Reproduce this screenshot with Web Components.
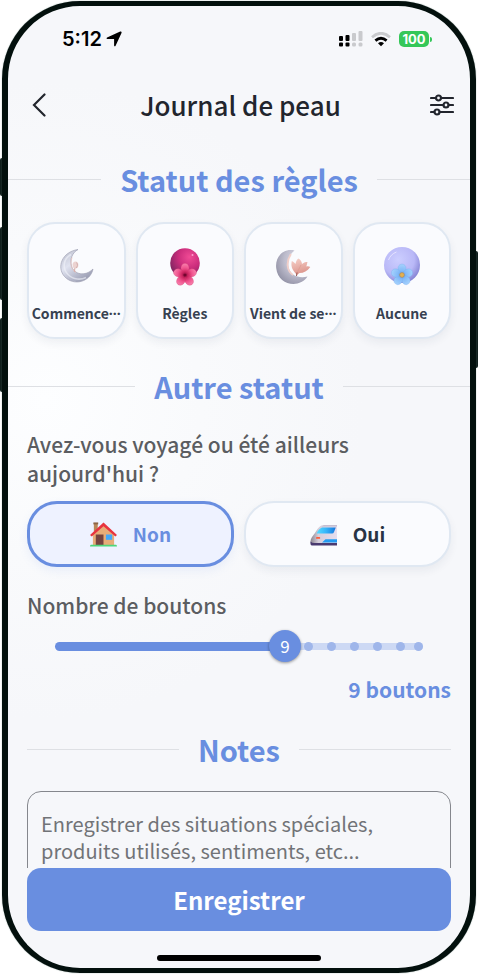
<!DOCTYPE html>
<html lang="fr">
<head>
<meta charset="utf-8">
<meta name="viewport" content="width=device-width, initial-scale=1">
<title>Journal de peau</title>
<style>
html{--blue:#698ee0;--ink:#22252d;--text:#5b5d61;--line:#dee0e4;--edge:#e0e8f2;--card:#fafbfe}
body{margin:0;background:#fff;color:var(--ink);font-family:"Noto Sans CJK SC","Noto Sans",sans-serif}
</style>
</head>
<body>
<phone-frame>
  <status-bar slot="status"></status-bar>
  <page-header slot="header">Journal de peau</page-header>
  <section-title wide>Statut des règles</section-title>
  <period-choices></period-choices>
  <section-title wide class="second">Autre statut</section-title>
  <travel-question></travel-question>
  <count-slider></count-slider>
  <section-title>Notes</section-title>
  <notes-field></notes-field>
  <save-bar slot="footer">Enregistrer</save-bar>
</phone-frame>

<script>
const define = (name, html, setup) => {
  const t = document.createElement('template');
  t.innerHTML = '<style>*{box-sizing:border-box}</style>' + html;
  customElements.define(name, class extends HTMLElement {
    constructor() {
      super();
      this.attachShadow({ mode: 'open' }).append(t.content.cloneNode(true));
    }
    connectedCallback() { if (setup) setup(this, this.shadowRoot); }
  });
};

define('phone-frame', `
<style>
:host{display:block;height:100vh;padding:1px 2px;box-sizing:border-box;position:relative}
.key{position:absolute;width:4px;background:#101f1c;border-radius:2px}
.k1{left:0;top:158px;height:38px}.k2{left:0;top:227px;height:73px}.k3{left:0;top:318px;height:74px}
.k4{right:0;top:251px;height:117px}
.case{position:relative;height:100%;border:solid #03100d;border-width:5px 6px;border-radius:78px;overflow:hidden;
 display:flex;flex-direction:column;box-shadow:0 0 1px #5b7a72;
 background:radial-gradient(circle at 8% 41%,#fdfeff 0,#f9fafc 22%,#f6f7fa 45%)}
.scroll{flex:1;min-height:0;overflow:hidden auto;scrollbar-width:none;padding:21px 19px 0}
</style>
<i class="key k1"></i><i class="key k2"></i><i class="key k3"></i><i class="key k4"></i>
<div class="case"><slot name="status"></slot><slot name="header"></slot>
<main class="scroll"><slot></slot></main><slot name="footer"></slot></div>`);

define('status-bar', `
<style>
:host{display:flex;align-items:center;justify-content:space-between;height:66px;padding:0 38px 0 54px;flex:none;color:#000}
div{display:flex;align-items:center}
.time{font:600 20px/24px Inter,sans-serif;gap:4px}
.icons{gap:8px}
.bat{display:flex;align-items:center;gap:1px}
.bat b{font:700 13px/16px Inter,sans-serif;color:#fff;background:#35c759;border-radius:5px;width:30px;text-align:center}
.bat i{width:2px;height:5px;background:#35c759;border-radius:0 2px 2px 0}
</style>
<div class="time"><span>5:12</span>
<svg width="16" height="16" viewBox="0 0 16 16"><path d="M15.300.700c.400.300.400.700.200 1.200L9.600 14.800c-.400.900-1.500.700-1.500-.300V8.400c0-.300-.100-.400-.400-.400H1.400C.400 8 .200 6.900 1.100 6.500L14.200.600c.400-.200.800-.200 1.100.100z"/></svg></div>
<div class="icons">
<svg width="24" height="16" viewBox="0 0 24 16"><g fill="#c9cacd"><rect x="13" y="2" width="4" height="8" rx="1"/><rect x="19.500" y="0" width="4" height="10" rx="1"/><rect x="13" y="11.500" width="4" height="4" rx="1.500"/><rect x="19.500" y="11.500" width="4" height="4" rx="1.500"/></g><rect x="0" y="5" width="4" height="5" rx="1"/><rect x="6.500" y="4" width="4" height="6" rx="1"/><rect x="0" y="11.500" width="4" height="4" rx="1"/><rect x="6.500" y="11.500" width="4" height="4" rx="1"/></svg>
<svg width="20" height="15" viewBox="0 0 20 15"><path d="M1 5.200q9-7.800 18 0" fill="none" stroke="#c9cacd" stroke-width="2.800"/><path d="M4.400 8.600q5.600-4.700 11.200 0" fill="none" stroke="#000" stroke-width="2.800"/><path d="M7 11.200q3-2.500 6 0L10 14.300z"/></svg>
<span class="bat"><b>100</b><i></i></span></div>`);

define('page-header', `
<style>
:host{display:grid;grid-template-columns:32px 1fr 32px;align-items:center;height:66px;padding:0 12px 0 15px;flex:none}
button{border:0;background:none;padding:0;height:32px;display:grid;place-items:center;color:inherit}
h1{margin:0;font-size:26px;line-height:36px;font-weight:500;text-align:center;white-space:nowrap}
svg{fill:none;stroke:currentColor;stroke-width:2.200;stroke-linecap:round}
</style>
<button aria-label="Retour"><svg width="14" height="24" viewBox="0 0 14 24"><path d="M12.500 1.500 2 12l10.500 10.500"/></svg></button>
<h1><slot></slot></h1>
<button aria-label="Réglages"><svg width="24" height="22" viewBox="0 0 24 22"><path d="M1 4h4.800M11.200 4H23M1 11h12.300M18.700 11H23M1 18h3.300M9.700 18H23"/><circle cx="8.500" cy="4" r="2.500"/><circle cx="16" cy="11" r="2.500"/><circle cx="7" cy="18" r="2.500"/></svg></button>`);

define('section-title', `
<style>
:host{display:flex;align-items:center;gap:19px;height:40px}
:host([wide]){margin:0 -19px}
:host(.second){margin-top:27px}
:host::before,:host::after{content:"";flex:1;height:1px;background:var(--line)}
h2{margin:0;font-size:29px;line-height:42px;font-weight:700;color:var(--blue)}
</style><h2><slot></slot></h2>`);

define('period-choices', `
<style>
:host{display:grid;grid-template-columns:repeat(4,minmax(0,1fr));gap:10px;margin-top:23px}
button{height:117px;padding:20px 0 0;border:2px solid var(--edge);border-radius:28px;background:var(--card);
 box-shadow:0 4px 8px #20305010;display:flex;flex-direction:column;align-items:center;gap:14px;font:inherit;color:#374151;min-width:0}
span{font-size:14px;line-height:22px;font-weight:700;white-space:nowrap}
.dots{font-family:"Open Sans","Noto Sans",sans-serif;font-style:normal}
</style>
<button><svg width="44" height="44" viewBox="0 0 44 44"><defs>
<linearGradient id="m1" x1="0" y1="0" x2=".7" y2="1"><stop stop-color="#b7bac9"/><stop offset=".45" stop-color="#e0e3f0"/><stop offset="1" stop-color="#999cb2"/></linearGradient></defs>
<path d="M22.500 5.500C6 8 1 23.500 9 32.500c9 10 26 5.500 28.500-7.500-8 8-19 5.500-21.500-3C14 15 17 8.500 22.500 5.500z" transform="translate(1.500 0)" fill="url(#m1)" stroke="#a0a2b4" stroke-width=".7"/>
<path d="M17 10.500C8.500 15 8.500 25 14 30.500s13 5.500 18 3" fill="none" stroke="#f2f3fa" stroke-width="1.600" opacity=".6"/>
<path d="M18 13.500c-2.500 7-.5 12 4 15" fill="none" stroke="#e7c5c2" stroke-width=".9"/>
<path d="M20.500 28c-.2-3 .5-5 1.500-7" fill="none" stroke="#d8b1ad" stroke-width="1.300"/><ellipse cx="21.500" cy="21" rx="2.900" ry="3.600" fill="#ecd3d1"/><path d="M22.500 18.500c1.600 2 1 4-.5 5.500" fill="none" stroke="#c9a19f" stroke-width=".7"/></svg><span>Commence<i class="dots">···</i></span></button>
<button><svg width="44" height="44" viewBox="0 0 44 44"><defs>
<radialGradient id="r1" cx=".65" cy=".3" r=".75"><stop stop-color="#f04b95"/><stop offset=".5" stop-color="#cb2d7c"/><stop offset="1" stop-color="#7c2560"/></radialGradient>
<radialGradient id="r2" gradientUnits="userSpaceOnUse" cx="22" cy="31" r="12"><stop stop-color="#8a0a3c"/><stop offset=".3" stop-color="#d32a66"/><stop offset=".6" stop-color="#f05590"/><stop offset="1" stop-color="#f885b0"/></radialGradient></defs>
<circle cx="22" cy="19" r="14.800" fill="url(#r1)"/><circle cx="29.500" cy="11" r="1" fill="#ff9dcc"/>
<g fill="url(#r2)" stroke="#cf3068" stroke-width=".3"><path id="p" d="M22 31c-5-3.500-5-9-2-11.200q2-1.300 4 0c3 2.200 3 7.700-2 11.200z"/><use href="#p" transform="rotate(72 22 31)"/><use href="#p" transform="rotate(144 22 31)"/><use href="#p" transform="rotate(216 22 31)"/><use href="#p" transform="rotate(288 22 31)"/></g><circle cx="22" cy="31" r="1.600" fill="#74052f"/></svg><span>Règles</span></button>
<button><svg width="44" height="44" viewBox="0 0 44 44"><defs>
<radialGradient id="v1" cx=".7" cy=".3" r=".8"><stop stop-color="#deddeb"/><stop offset=".55" stop-color="#bdbccc"/><stop offset="1" stop-color="#9191a5"/></radialGradient>
<linearGradient id="v2" x1="0" y1="0" x2=".3" y2="1"><stop stop-color="#f7d2cb"/><stop offset="1" stop-color="#dc958c"/></linearGradient></defs>
<path d="M23.500 6.500C11 4 4 14 5.200 24 7 42 29 44.500 36.500 32.500c-8 2-16.500-.5-18.700-8.500-1.800-7.500 1-14 5.700-17.500z" fill="url(#v1)"/>
<path d="M20 10c-5.500 8-4 17 2 21" fill="none" stroke="#f1cfc9" stroke-width="1.800"/>
<path d="M26 31c-6-6-6-10-5.200-14 2 1 3 2 3.700 3 .5-3 1.500-4.500 3-5.500 2 1 3.300 3 3.500 5.500 2-1.700 4-2 5.500-2-.5 2-.7 3.200-1.200 4.500 1.600-.5 2.700-.3 4 .5-3 4-6.500 6-10.800 6L26 31z" fill="url(#v2)"/><path d="M26 29c2-4 3-6 4-8" fill="none" stroke="#d8958c" stroke-width=".6"/><path d="M26 28.500 25.500 32" stroke="#98544e" stroke-width="1"/></svg><span>Vient de se<i class="dots">···</i></span></button>
<button><svg width="44" height="44" viewBox="0 0 44 44"><defs>
<radialGradient id="a1" cx=".4" cy=".35" r=".68"><stop stop-color="#ccceff"/><stop offset=".65" stop-color="#b9b8f7"/><stop offset="1" stop-color="#8483d3"/></radialGradient>
<radialGradient id="a2" gradientUnits="userSpaceOnUse" cx="22" cy="31" r="11"><stop stop-color="#5f99ea"/><stop offset=".4" stop-color="#83baf8"/><stop offset="1" stop-color="#a5d2fd"/></radialGradient></defs>
<circle cx="22" cy="21" r="18" fill="url(#a1)"/><path d="M8.500 16c1.500-4 4-6.500 8-8" fill="none" stroke="#eceaff" stroke-width="1" opacity=".8"/>
<g fill="url(#a2)" stroke="#73a8ec" stroke-width=".3"><path id="q" d="M22 31c-5-3.500-5-8.500-2-10.500q2-1 4 0c3 2 3 7-2 10.500z"/><use href="#q" transform="rotate(72 22 31)"/><use href="#q" transform="rotate(144 22 31)"/><use href="#q" transform="rotate(216 22 31)"/><use href="#q" transform="rotate(288 22 31)"/></g><circle cx="22" cy="31" r="2.400" fill="#e3b04f" stroke="#9f7f55" stroke-width=".5"/></svg><span>Aucune</span></button>`);

define('travel-question', `
<style>
:host{display:block;margin-top:24px}
p{margin:0 0 13px;font-size:21px;line-height:29px;font-weight:500;color:var(--text)}
div{display:grid;grid-template-columns:1fr 1fr;gap:10px}
button{height:66px;border:2px solid var(--edge);border-radius:30px;background:var(--card);box-shadow:0 4px 8px #20305010;
 display:flex;align-items:center;justify-content:center;gap:16px;font:inherit;font-size:19px;line-height:28px;font-weight:700;color:#283344;padding:0}
button[aria-pressed=true]{border:3px solid var(--blue);background:#eef2ff;color:var(--blue);box-shadow:0 4px 10px #698ee01c}
</style>
<p>Avez-vous voyagé ou été ailleurs aujourd'hui&nbsp;?</p>
<div>
<button aria-pressed="true"><svg width="27" height="27" viewBox="0 0 28 28"><path d="M4 2h4v9H4z" fill="#b78859"/><path d="M3.500 1.500h5v2h-5z" fill="#8d6546"/><path d="M3 14 14 3l11 11v12H3z" fill="#e7ad78"/><path d="m0 14.500 14-13 14 13-1.700 1.700L14 5.500 1.800 16.200z" fill="#e8343f"/><path d="M6 14h8v11H6z" fill="#764440"/><path d="M16.500 14H23v5.500h-6.500z" fill="#42a8fa"/><path d="M1 24.500h26q1 0 1 2H0q0-2 1-2z" fill="#4ed77b"/></svg>Non</button>
<button aria-pressed="false"><svg width="27" height="27" viewBox="0 0 27 27"><defs><linearGradient id="t" x1="0" x2="1"><stop stop-color="#8b8590"/><stop offset=".3" stop-color="#d5cedb"/><stop offset="1" stop-color="#e6deef"/></linearGradient><linearGradient id="w" x1="0" x2="1"><stop stop-color="#55dcff"/><stop offset=".5" stop-color="#35b4fa"/><stop offset="1" stop-color="#1576dc"/></linearGradient></defs><path d="M14 4h13v18H1c-1.500-3 1-6 4-10 3-5 5-8 9-8z" fill="url(#t)"/><path d="M14 4h13v1.500H11.500z" fill="#c5bed1"/><path d="M12 6.500h13.800L24 11q-.5 1.500-2 1.500H6.500q2-4.500 5.500-6z" fill="url(#w)"/><path d="M27 18.200H15.500L12 21.500h15z" fill="#239bf2"/><path d="M.5 20.500q1.500 1.500 4 1.500H27v2.500H2q-2 0-1.500-4z" fill="#493a70"/><rect x="6" y="16" width="4.200" height="1.800" rx=".9" fill="#ff5a38"/></svg>Oui</button>
</div>`);

define('count-slider', `
<style>
:host{display:block;margin:24px 0 25px;--pos:62.5%}
label{display:block;font-size:21px;line-height:29px;font-weight:500;color:var(--text)}
.track{position:relative;display:flex;align-items:center;height:32px;margin:10px 28px 13px}
.done{width:var(--pos);height:9px;background:var(--blue);border-radius:5px 0 0 5px}
.rest{flex:1;height:7px;background:#cdd9f4;border-radius:0 4px 4px 0;display:grid;align-items:center;align-content:center;grid-template-columns:28px repeat(4,23px) 1fr}
.rest i{justify-self:end;width:9px;height:9px;border-radius:50%;background:#9fb6ea}
input{position:absolute;inset:0 -16px;margin:0;height:32px;appearance:none;background:none}
input::-webkit-slider-thumb{appearance:none;width:32px;height:32px;border-radius:50%;background:var(--blue);box-shadow:0 1px 3px #0006}
output.num{position:absolute;left:var(--pos);transform:translateX(-50%);color:#fff;font-size:17px;line-height:32px;pointer-events:none}
.total{display:block;text-align:right;font-size:21px;line-height:29px;font-weight:700;color:var(--blue)}
</style>
<label for="n">Nombre de boutons</label>
<div class="track"><span class="done"></span><span class="rest"><i></i><i></i><i></i><i></i><i></i><i></i></span>
<input id="n" type="range" min="-1" max="15" value="9"><output class="num" for="n">9</output></div>
<output class="total" for="n">9 boutons</output>`, (host, root) => {
  const input = root.querySelector('input');
  input.addEventListener('input', () => {
    host.style.setProperty('--pos', (Number(input.value) + 1) / 16 * 100 + '%');
    const n = Math.max(0, input.value);
    root.querySelector('.num').textContent = n;
    root.querySelector('.total').textContent = n + ' boutons';
  });
});

define('notes-field', `
<style>
:host{display:block;margin-top:22px}
textarea{display:block;width:100%;height:150px;border:1px solid #85878d;border-radius:14px;background:none;padding:18px 13px;
 font:inherit;font-size:20px;line-height:27px;resize:none;outline:0}
textarea::placeholder{color:#717377;opacity:1}
</style>
<textarea aria-label="Notes" placeholder="Enregistrer des situations spéciales, produits utilisés, sentiments, etc..."></textarea>`);

define('save-bar', `
<style>
:host{display:flex;flex-direction:column;align-items:center;gap:24px;padding:0 19px 7px;flex:none}
button{width:100%;height:63px;border:0;border-radius:14px;background:var(--blue);color:#fff;font:inherit;font-size:24px;line-height:34px;font-weight:700}
i{width:164px;height:6px;border-radius:3px;background:#000}
</style><button><slot></slot></button><i></i>`);
</script>
</body>
</html>
